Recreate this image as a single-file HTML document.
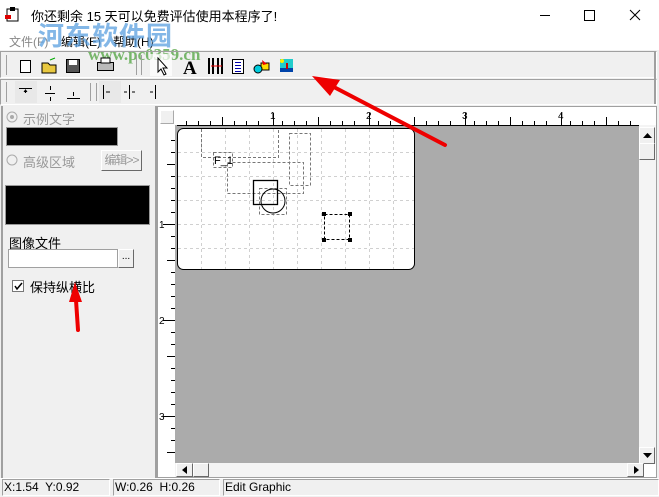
<!DOCTYPE html>
<html><head><meta charset="utf-8"><style>
*{margin:0;padding:0;box-sizing:border-box}
body{width:659px;height:497px;background:#f0f0f0;position:relative;overflow:hidden;font-family:"Liberation Sans","Noto Sans CJK SC",sans-serif;font-size:12px;color:#000}
.a{position:absolute}
.tb{border:1px solid #a0a0a0;border-right-color:#fff;border-bottom-color:#fff}
.btn{position:absolute;background:#f0f0f0;border:1px solid;border-color:#fff #696969 #696969 #fff}
.zh{font-family:"Liberation Sans","Noto Sans CJK SC",sans-serif;white-space:nowrap}
</style></head><body>
<div class="a" style="left:0;top:0;width:659px;height:50px;background:#fff"></div>
<svg class="a" style="left:4px;top:6px" width="18" height="18"><rect x="3" y="3" width="11" height="12" fill="#fff" stroke="#000"/><rect x="1" y="9" width="6" height="4" fill="#d00"/><rect x="6" y="1" width="5" height="4" fill="#000"/></svg>
<div class="a zh" style="left:31px;top:6px;font-size:13px">你还剩余 15 天可以免费评估使用本程序了!</div>
<svg class="a" style="left:530px;top:8px" width="120" height="16"><line x1="10" y1="7.5" x2="20" y2="7.5" stroke="#000"/><rect x="84.5" y="2.5" width="10" height="10" fill="none" stroke="#000" transform="translate(-30 0)"/><path d="M100 2L110 12M110 2L100 12" stroke="#000"/></svg>
<div class="a zh" style="left:9px;top:33px;color:#888">文件(F)</div>
<div class="a zh" style="left:61px;top:33px">编辑(E)</div>
<div class="a zh" style="left:113px;top:33px">帮助(H)</div>
<div class="a zh" style="left:38px;top:16px;font-size:26px;font-weight:bold;color:#5aa0e0;opacity:.75;letter-spacing:1px">河东软件园</div>
<div class="a" style="left:88px;top:45px;font-size:17px;font-weight:bold;color:#5aa84a;opacity:.8;font-family:'Liberation Serif',serif">www.pc0359.cn</div>
<div class="a tb" style="left:0;top:51px;width:657px;height:27px"></div>
<div class="a tb" style="left:0;top:79px;width:657px;height:26px"></div>
<div class="a" style="left:654px;top:52px;width:2px;height:52px;background:#a0a0a0"></div>
<svg class="a" style="left:0;top:51px" width="300" height="54">
<g stroke="#a0a0a0"><line x1="6.5" y1="4" x2="6.5" y2="24"/><line x1="136.5" y1="4" x2="136.5" y2="24"/><line x1="141.5" y1="4" x2="141.5" y2="24"/><line x1="6.5" y1="31" x2="6.5" y2="51"/><line x1="90.5" y1="32" x2="90.5" y2="50"/><line x1="96.5" y1="32" x2="96.5" y2="50"/></g>
<rect x="20.5" y="9.5" width="10" height="12" fill="#fff" stroke="#000"/>
<path d="M42 12h6l2 2h6v8H42z" fill="#e8c840" stroke="#000"/><path d="M50 9l5-2" stroke="#0a0"/>
<rect x="66.5" y="8.5" width="13" height="13" fill="#555" stroke="#000"/><rect x="69" y="9" width="8" height="5" fill="#fff"/>
<rect x="97.5" y="11.5" width="16" height="8" fill="#bbb" stroke="#000"/><rect x="101" y="7" width="9" height="5" fill="#fff" stroke="#000"/>
<rect x="150" y="3" width="22" height="22" fill="#fff" opacity=".7"/>
<path d="M158 7v14l3-3 3 6 2-1-3-6h4z" fill="#fff" stroke="#000"/>
<text x="183" y="23" font-family="Liberation Serif" font-weight="bold" font-size="19">A</text>
<g stroke="#000" stroke-width="2"><line x1="209" y1="7" x2="209" y2="23"/><line x1="213" y1="7" x2="213" y2="23"/><line x1="218" y1="7" x2="218" y2="23"/><line x1="222" y1="7" x2="222" y2="23"/></g><line x1="211" y1="15" x2="222" y2="15" stroke="#e00"/>
<rect x="232.5" y="8.5" width="11" height="14" fill="#fff" stroke="#000"/><g stroke="#00a"><line x1="235" y1="11.5" x2="241" y2="11.5"/><line x1="235" y1="14.5" x2="241" y2="14.5"/><line x1="235" y1="17.5" x2="241" y2="17.5"/><line x1="235" y1="20.5" x2="241" y2="20.5"/></g>
<rect x="261" y="12" width="8" height="7" fill="#fd0" stroke="#000"/><circle cx="258" cy="18" r="4" fill="#0cd" stroke="#000"/><path d="M262 9l5 4-4 1z" fill="#e00"/>
<rect x="280" y="8" width="13" height="13" fill="#2cc"/><rect x="280" y="17" width="13" height="4" fill="#04a"/><circle cx="282" cy="10" r="2" fill="#fe0"/><rect x="286" y="12" width="2" height="6" fill="#c00"/>
<g stroke="#000"><rect x="15" y="30" width="22" height="22" fill="#e8e8e8" stroke="none"/><line x1="19" y1="37.5" x2="32" y2="37.5"/><path d="M25.5 39v3M24 41l1.5-2 1.5 2"/>
<line x1="45" y1="42.5" x2="55" y2="42.5"/><path d="M50.5 35v4M50.5 46v4"/>
<line x1="67" y1="47.5" x2="80" y2="47.5"/><path d="M73.5 41v4"/>
<rect x="99" y="30" width="22" height="22" fill="#e8e8e8" stroke="none"/><line x1="103.5" y1="34" x2="103.5" y2="48"/><path d="M106 41h4"/>
<line x1="129.5" y1="34" x2="129.5" y2="48"/><path d="M124 41h3M132 41h3"/><line x1="155.5" y1="34" x2="155.5" y2="48"/><path d="M150 41h3"/></g>
</svg>
<div class="a" style="left:155px;top:106px;width:2px;height:372px;background:#a0a0a0"></div>
<div class="a" style="left:1px;top:106px;width:2px;height:372px;background:#a0a0a0"></div>
<svg class="a" style="left:6px;top:111px" width="12" height="12"><circle cx="6" cy="6" r="5" fill="#f0f0f0" stroke="#aaa"/><circle cx="6" cy="6" r="2" fill="#aaa"/></svg>
<div class="a zh" style="left:23px;top:109px;font-size:13px;color:#999">示例文字</div>
<div class="a" style="left:6px;top:127px;width:112px;height:19px;background:#000;border:1px solid #999"></div>
<svg class="a" style="left:6px;top:154px" width="12" height="12"><circle cx="6" cy="6" r="5" fill="#f0f0f0" stroke="#aaa"/></svg>
<div class="a zh" style="left:23px;top:152px;font-size:13px;color:#999">高级区域</div>
<div class="btn zh" style="left:101px;top:150px;width:41px;height:21px;font-size:12px;color:#999;text-align:center;line-height:18px;letter-spacing:-1px;overflow:hidden">编辑&gt;&gt;</div>
<div class="a" style="left:5px;top:185px;width:145px;height:40px;background:#000;border:1px solid #999"></div>
<div class="a zh" style="left:9px;top:233px;font-size:13px">图像文件</div>
<div class="a" style="left:8px;top:249px;width:110px;height:19px;background:#fff;border:1px solid #a0a0a0"></div>
<div class="btn" style="left:118px;top:249px;width:16px;height:19px;font-size:10px;text-align:center;line-height:14px">...</div>
<div class="a" style="left:12px;top:280px;width:12px;height:12px;background:#fff;border:1px solid #777"></div>
<svg class="a" style="left:12px;top:280px" width="12" height="12"><path d="M3 6l2 3 5-6" stroke="#000" stroke-width="1.5" fill="none"/></svg>
<div class="a zh" style="left:30px;top:277px;font-size:13px">保持纵横比</div>
<div class="a" style="left:157px;top:106px;width:500px;height:372px;background:#fff;border:1px solid #a0a0a0"></div>
<div class="btn" style="left:160px;top:110px;width:14px;height:14px;border-color:#fff #aaa #aaa #fff"></div>
<div class="a" style="left:175px;top:125px;width:464px;height:338px;background:#ababab"></div>
<svg class="a" style="left:157px;top:106px" width="500" height="372">
<g stroke="#000">
<path d="M20 19.5H482M29.5 15v4M41.5 15v4M53.5 15v4M65.5 11v8M77.5 15v4M89.5 15v4M101.5 15v4M116.5 7v12M125.5 15v4M137.5 15v4M149.5 15v4M161.5 11v8M173.5 15v4M185.5 15v4M197.5 15v4M212.5 7v12M221.5 15v4M233.5 15v4M245.5 15v4M257.5 11v8M269.5 15v4M281.5 15v4M293.5 15v4M308.5 7v12M317.5 15v4M329.5 15v4M341.5 15v4M353.5 11v8M365.5 15v4M377.5 15v4M389.5 15v4M404.5 7v12M413.5 15v4M425.5 15v4M437.5 15v4M449.5 11v8M461.5 15v4M473.5 15v4"/>
<path d="M14 34.5h4M14 46.5h4M10 58.5h8M14 70.5h4M14 82.5h4M14 94.5h4M6 118.5h12M14 106.5h4M14 130.5h4M14 142.5h4M10 154.5h8M14 166.5h4M14 178.5h4M14 190.5h4M6 214.5h12M14 202.5h4M14 226.5h4M14 238.5h4M10 250.5h8M14 262.5h4M14 274.5h4M14 286.5h4M6 310.5h12M14 298.5h4M14 322.5h4M14 334.5h4M10 346.5h8"/>
</g>
<g font-size="10" font-family="Liberation Sans" fill="#000"><text x="113" y="13">1</text><text x="209" y="13">2</text><text x="305" y="13">3</text><text x="401" y="13">4</text><text x="2" y="122">1</text><text x="2" y="218">2</text><text x="2" y="314">3</text></g>
</svg>
<svg class="a" style="left:175px;top:125px" width="250" height="150">
<rect x="2.5" y="3.5" width="237" height="141" rx="6" fill="#fff" stroke="#000"/>
<g stroke="#d0d0d0" stroke-dasharray="3,3"><path d="M26.5 4v140M50.5 4v140M74.5 4v140M98.5 4v140M122.5 4v140M146.5 4v140M170.5 4v140M194.5 4v140M218.5 4v140M3 27.5h236M3 51.5h236M3 75.5h236M3 99.5h236M3 123.5h236"/></g>
<g stroke="#777" fill="none" stroke-dasharray="3,2"><path d="M26.5 4v28.5h77v-29"/><rect x="114.5" y="8.5" width="21" height="52"/><rect x="52.5" y="37.5" width="76" height="31"/><rect x="38.5" y="27.5" width="19" height="15"/><rect x="84.5" y="63.5" width="27" height="26"/></g>
<text x="39" y="39" font-size="11" font-family="Liberation Sans">F_1</text>
<rect x="78.5" y="55.5" width="24" height="24" fill="none" stroke="#000" stroke-width="1.3"/>
<circle cx="98" cy="76" r="12" fill="none" stroke="#000"/>
<rect x="149.5" y="89.5" width="25" height="25" fill="none" stroke="#000" stroke-dasharray="3,2"/>
<g fill="#000"><rect x="147" y="87" width="4" height="4"/><rect x="173" y="87" width="4" height="4"/><rect x="147" y="113" width="4" height="4"/><rect x="173" y="113" width="4" height="4"/></g>
</svg>
<div class="a" style="left:639px;top:125px;width:17px;height:339px;background:#f4f4f4"></div>
<div class="btn" style="left:639px;top:127px;width:16px;height:17px"></div>
<svg class="a" style="left:643px;top:133px" width="9" height="5"><path d="M0 5L4.5 0L9 5z"/></svg>
<div class="btn" style="left:639px;top:143px;width:16px;height:17px"></div>
<div class="btn" style="left:639px;top:447px;width:16px;height:17px"></div>
<svg class="a" style="left:643px;top:453px" width="9" height="5"><path d="M0 0L4.5 5L9 0z"/></svg>
<div class="a" style="left:175px;top:463px;width:464px;height:14px;background:#f4f4f4"></div>
<div class="btn" style="left:176px;top:463px;width:17px;height:14px"></div>
<svg class="a" style="left:182px;top:466px" width="5" height="8"><path d="M5 0L0 4L5 8z"/></svg>
<div class="btn" style="left:193px;top:463px;width:16px;height:14px"></div>
<div class="btn" style="left:627px;top:463px;width:17px;height:14px"></div>
<svg class="a" style="left:634px;top:466px" width="5" height="8"><path d="M0 0L5 4L0 8z"/></svg>
<div class="a" style="left:0;top:478px;width:659px;height:19px;background:#f0f0f0;border-top:1px solid #fff"></div>
<div class="a tb" style="left:2px;top:479px;width:108px;height:17px;padding-left:1px;line-height:15px">X:1.54&nbsp; Y:0.92</div>
<div class="a tb" style="left:113px;top:479px;width:107px;height:17px;padding-left:1px;line-height:15px">W:0.26&nbsp; H:0.26</div>
<div class="a tb" style="left:223px;top:479px;width:436px;height:17px;padding-left:1px;line-height:15px">Edit Graphic</div>
<svg class="a" style="left:0;top:0" width="659" height="497">
<line x1="445" y1="145" x2="330" y2="85" stroke="#e00" stroke-width="4" stroke-linecap="round"/>
<path d="M312 76L340 80L330 96z" fill="#e00"/>
<line x1="78" y1="330" x2="76" y2="300" stroke="#e00" stroke-width="4" stroke-linecap="round"/>
<path d="M75 282L82 302L69 302z" fill="#e00"/>
</svg>
</body></html>
